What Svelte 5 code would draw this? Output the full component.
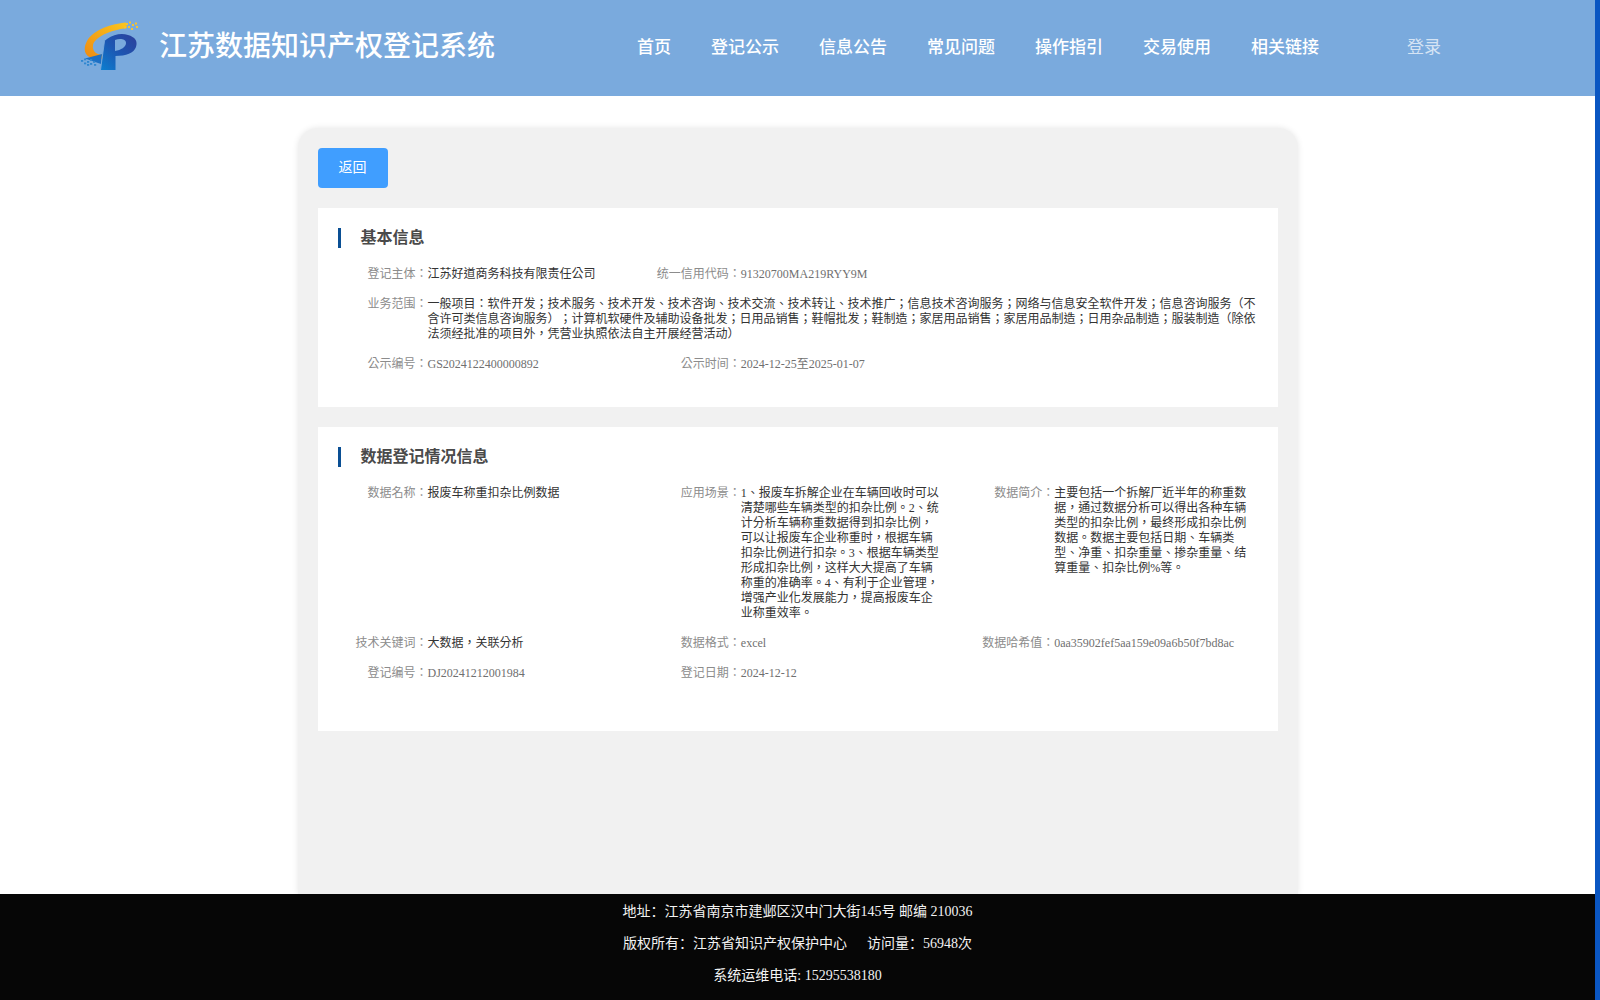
<script>
  const nav = ['首页', '登记公示', '信息公告', '常见问题', '操作指引', '交易使用', '相关链接'];
  const dots = [[46,2],[49,0.5],[52,3],[48,5],[55,1.5],[51,7],[56,5],[44,5.5]];
  const dots2 = [[1,39],[4,37.5],[7,40],[4,41.5],[10,38],[10,42],[13,40],[7,43],[14,43]];
</script>

<div class="page">
  <div class="column">
    <header class="header">
      <svg class="logo" viewBox="0 0 58 50" aria-hidden="true">
        <defs>
          <linearGradient id="arc" x1="0" y1="1" x2="1" y2="0">
            <stop offset="0" stop-color="#ee8a12" />
            <stop offset="1" stop-color="#fbc61e" />
          </linearGradient>
          <linearGradient id="pee" x1="0" y1="1" x2="1" y2="0">
            <stop offset="0" stop-color="#0b7fd0" />
            <stop offset="0.5" stop-color="#1d56b2" />
            <stop offset="1" stop-color="#2d3f9a" />
          </linearGradient>
        </defs>
        <path d="M46 1.5 C32 3 14 8 7 20 C3 27 4 35 12 37 C17 38.5 22 38.5 25 38 L25 34 C17 34 12 31 13 24 C15 16 30 9 47 7 Z" fill="url(#arc)" />
        <path d="M27 18 C34 13 42 12 48 14 C55 16 58 20 56 26 C54 32 46 35 35.5 35 L35.5 49 L20.5 49 L24.5 20 Z" fill="url(#pee)" />
        <path d="M35 19 C40 17 46 18 46 22 C46 26 41 29 35 30 Z" fill="#7aaadd" />
        <path d="M5 37.5 L22 33 L21 43 Z" fill="#1c6fc4" />
        <path d="M24.5 20 L20.5 49" stroke="#7aaadd" stroke-width="0.9" fill="none" />
        {#each dots as d}
          <rect x={d[0]} y={d[1]} width="2" height="2" fill="#f5c431" />
        {/each}
        {#each dots2 as d}
          <rect x={d[0]} y={d[1]} width="2.2" height="1.8" fill="#2f87d0" />
        {/each}
      </svg>
      <h1 class="brand">江苏数据知识产权登记系统</h1>
      <nav class="nav">
        {#each nav as item}
          <span class="nav-item">{item}</span>
        {/each}
      </nav>
      <span class="login">登录</span>
    </header>

    <main class="main">
      <div class="card">
        <button class="back" type="button">返回</button>

        <section class="panel basic">
          <h2 class="title">基本信息</h2>
          <div class="rows">
            <div class="row">
              <div class="field">
                <span class="label">登记主体：</span>
                <span class="value dark">江苏好道商务科技有限责任公司</span>
              </div>
              <div class="field">
                <span class="label">统一信用代码：</span>
                <span class="value">91320700MA219RYY9M</span>
              </div>
            </div>
            <div class="row">
              <div class="field wide">
                <span class="label">业务范围：</span>
                <span class="value dark">一般项目：软件开发；技术服务、技术开发、技术咨询、技术交流、技术转让、技术推广；信息技术咨询服务；网络与信息安全软件开发；信息咨询服务（不含许可类信息咨询服务）；计算机软硬件及辅助设备批发；日用品销售；鞋帽批发；鞋制造；家居用品销售；家居用品制造；日用杂品制造；服装制造（除依法须经批准的项目外，凭营业执照依法自主开展经营活动）</span>
              </div>
            </div>
            <div class="row">
              <div class="field">
                <span class="label">公示编号：</span>
                <span class="value">GS2024122400000892</span>
              </div>
              <div class="field">
                <span class="label">公示时间：</span>
                <span class="value">2024-12-25至2025-01-07</span>
              </div>
            </div>
          </div>
        </section>

        <section class="panel data">
          <h2 class="title">数据登记情况信息</h2>
          <div class="rows">
            <div class="row">
              <div class="field">
                <span class="label">数据名称：</span>
                <span class="value dark">报废车称重扣杂比例数据</span>
              </div>
              <div class="field">
                <span class="label">应用场景：</span>
                <span class="value dark">1、报废车拆解企业在车辆回收时可以清楚哪些车辆类型的扣杂比例。2、统计分析车辆称重数据得到扣杂比例，可以让报废车企业称重时，根据车辆扣杂比例进行扣杂。3、根据车辆类型形成扣杂比例，这样大大提高了车辆称重的准确率。4、有利于企业管理，增强产业化发展能力，提高报废车企业称重效率。</span>
              </div>
              <div class="field">
                <span class="label">数据简介：</span>
                <span class="value dark">主要包括一个拆解厂近半年的称重数据，通过数据分析可以得出各种车辆类型的扣杂比例，最终形成扣杂比例数据。数据主要包括日期、车辆类型、净重、扣杂重量、掺杂重量、结算重量、扣杂比例%等。</span>
              </div>
            </div>
            <div class="row">
              <div class="field">
                <span class="label">技术关键词：</span>
                <span class="value dark">大数据，关联分析</span>
              </div>
              <div class="field">
                <span class="label">数据格式：</span>
                <span class="value">excel</span>
              </div>
              <div class="field">
                <span class="label">数据哈希值：</span>
                <span class="value">0aa35902fef5aa159e09a6b50f7bd8ac</span>
              </div>
            </div>
            <div class="row">
              <div class="field">
                <span class="label">登记编号：</span>
                <span class="value">DJ20241212001984</span>
              </div>
              <div class="field">
                <span class="label">登记日期：</span>
                <span class="value">2024-12-12</span>
              </div>
            </div>
          </div>
        </section>
      </div>
    </main>

    <footer class="footer">
      <p>地址：江苏省南京市建邺区汉中门大街145号 邮编 210036</p>
      <p>版权所有：江苏省知识产权保护中心<span class="spacer"></span>访问量：56948次</p>
      <p>系统运维电话: 15295538180</p>
    </footer>
  </div>
  <div class="rail"></div>
</div>

<style>
  :global(body) {
    margin: 0;
    overflow: hidden;
    background: #fff;
  }

  .page {
    display: grid;
    grid-template-columns: 1fr 5px;
    height: 1000px;
    font-family: "Liberation Serif", "Noto Sans CJK SC", serif;
  }

  .column {
    display: flex;
    flex-direction: column;
    min-width: 0;
    height: 1000px;
  }

  .rail {
    background: #0a56c2;
  }

  .header {
    display: flex;
    align-items: center;
    flex: none;
    height: 96px;
    padding-left: 80px;
    background: #7aaadd;
    color: #fff;
  }

  .logo {
    flex: none;
    width: 58px;
    height: 50px;
    margin-top: -5px;
  }

  .brand {
    margin: -3px 0 0 21px;
    font-size: 28px;
    font-weight: 500;
    line-height: 40px;
    white-space: nowrap;
  }

  .nav {
    display: flex;
    gap: 40px;
    margin-left: 142px;
  }

  .nav-item {
    font-size: 17px;
    font-weight: 500;
    line-height: 24px;
    white-space: nowrap;
  }

  .login {
    margin-left: 88px;
    font-size: 17px;
    line-height: 24px;
    color: rgba(255, 255, 255, 0.7);
  }

  .main {
    display: flex;
    flex: 1;
    justify-content: center;
    min-height: 0;
    padding-top: 32px;
  }

  .card {
    box-sizing: border-box;
    width: 1000px;
    padding: 20px;
    background: #f1f1f1;
    border-radius: 20px 20px 0 0;
    box-shadow: 0 0 6px rgba(0, 0, 0, 0.1);
  }

  .back {
    display: block;
    width: 70px;
    height: 40px;
    padding: 0 0 4px;
    border: 0;
    border-radius: 4px;
    background: #409eff;
    color: #fff;
    font: inherit;
    font-size: 14px;
  }

  .panel {
    box-sizing: border-box;
    margin-top: 20px;
    padding: 20px 10px 0;
    background: #fff;
  }

  .basic {
    height: 199px;
  }

  .data {
    height: 304px;
  }

  .title {
    height: 20px;
    margin: 0 0 0 10px;
    padding-left: 20px;
    border-left: 3px solid #0a4f94;
    color: #4a4a4a;
    font-size: 16px;
    font-weight: 700;
    line-height: 20px;
  }

  .rows {
    display: flex;
    flex-direction: column;
    gap: 15px;
    margin-top: 19px;
  }

  .row {
    display: grid;
    grid-template-columns: repeat(3, 1fr);
  }

  .field {
    display: grid;
    grid-template-columns: 100px 1fr;
    font-size: 12px;
    line-height: 15px;
    font-family: "Liberation Serif", "Noto Sans CJK TC", serif;
    text-spacing-trim: space-all;
  }

  .wide {
    grid-column: 1 / -1;
  }

  .label {
    justify-self: end;
    white-space: nowrap;
    color: #8c8c8c;
  }

  .value {
    padding-right: 12px;
    color: #707070;
  }

  .dark {
    color: #333;
  }

  .footer {
    flex: none;
    box-sizing: border-box;
    height: 106px;
    padding-top: 2px;
    background: #060606;
    color: #f2f2f2;
    font-size: 14px;
    line-height: 32px;
    text-align: center;
  }

  .footer p {
    margin: 0;
  }

  .spacer {
    display: inline-block;
    width: 20px;
  }
</style>
